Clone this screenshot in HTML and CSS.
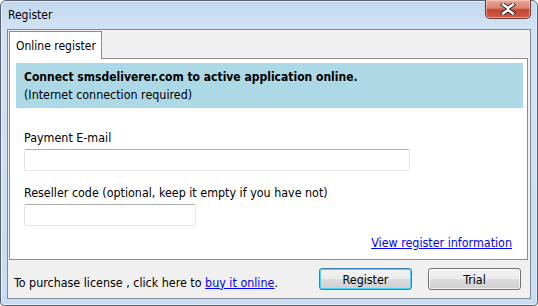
FILE: index.html
```html
<!DOCTYPE html>
<html>
<head>
<meta charset="utf-8">
<link rel="stylesheet" href="styles.css">
</head>
<body>
<div class="window">
  <div class="titlebar">
    <span class="title">Register</span>
    <div class="close">
      <svg width="16" height="12" viewBox="0 0 16 12">
        <path d="M3 1.5 L8 5 L13 1.5 M3 10.5 L8 7 L13 10.5" fill="none" stroke="#3a2a2a" stroke-width="4.4" stroke-linecap="square"/>
        <path d="M3 1.5 L8 5 L13 1.5 M3 10.5 L8 7 L13 10.5" fill="none" stroke="#ffffff" stroke-width="2.4" stroke-linecap="square"/>
      </svg>
    </div>
  </div>
  <div class="client">
    <div class="tabstrip">
      <div class="tab">Online register</div>
    </div>
    <div class="tabpage">
      <div class="banner">
        <div class="banner-title">Connect smsdeliverer.com to active application online.</div>
        <div class="banner-sub">(Internet connection required)</div>
      </div>
      <div class="field field-first">
        <label class="label">Payment E-mail</label>
        <div class="input input-wide"></div>
      </div>
      <div class="field field-next">
        <label class="label">Reseller code (optional, keep it empty if you have not)</label>
        <div class="input input-short"></div>
      </div>
      <div class="info-row">
        <a class="link" href="#">View register information</a>
      </div>
    </div>
    <div class="footer">
      <span class="purchase">To purchase license , click here to <a class="link" href="#">buy it online</a>.</span>
      <div class="buttons">
        <button class="btn btn-default">Register</button>
        <button class="btn">Trial</button>
      </div>
    </div>
  </div>
</div>
</body>
</html>
```
FILE: styles.css
```css
html, body {
  margin: 0;
  padding: 0;
  background: #ffffff;
}
body {
  font-family: "DejaVu Sans Condensed", "DejaVu Sans", Tahoma, sans-serif;
  font-size: 12.4px;
  color: #000;
}
.window {
  box-sizing: border-box;
  width: 538px;
  height: 306px;
  border: 1px solid #5a6470;
  border-radius: 6px 6px 4px 4px;
  background: linear-gradient(180deg, #c4d8ee 0px, #d3e3f4 30px, #c9dcf1 100%);
  display: flex;
  flex-direction: column;
  padding: 0 6px 6px 6px;
  box-shadow: inset 0 0 0 1px #e6eef8;
}
.titlebar {
  height: 28px;
  display: flex;
  align-items: flex-start;
  position: relative;
}
.title {
  font-size: 12px;
  margin-top: 7px;
  margin-left: 1px;
  color: #000;
}
.close {
  position: absolute;
  right: 0px;
  top: -1px;
  width: 46px;
  height: 19px;
  box-sizing: border-box;
  border: 1px solid #6d3a36;
  border-top: none;
  border-radius: 0 0 5px 5px;
  background: linear-gradient(180deg, #e9a99a 0%, #d88170 45%, #c4442f 55%, #cf5d48 100%);
  display: flex;
  align-items: center;
  justify-content: center;
  box-shadow: inset 0 0 0 1px rgba(255,220,210,0.5);
}
.client {
  flex: 1;
  border: 1px solid #7f8894;
  background: #f0f0f0;
  display: flex;
  flex-direction: column;
}
.tabstrip {
  display: flex;
  height: 27px;
  padding-left: 1px;
  margin-top: 1px;
  position: relative;
  z-index: 1;
}
.tab {
  background: #ffffff;
  border: 1px solid #898c95;
  border-bottom: none;
  width: 93px;
  box-sizing: border-box;
  padding-left: 6px;
  display: flex;
  align-items: center;
  font-size: 12px;
  height: 28px;
  white-space: nowrap;
}
.tabpage {
  margin: 0 2px 0 1px;
  background: #ffffff;
  border: 1px solid #898c95;
  height: 202px;
  box-sizing: border-box;
  padding: 4px 4px 0 6px;
  display: flex;
  flex-direction: column;
}
.banner {
  background: #add8e6;
  height: 45px;
  padding: 5px 8px 0 8px;
  box-sizing: border-box;
}
.banner-title {
  font-weight: bold;
  font-size: 12px;
  line-height: 18px;
}
.banner-sub {
  font-size: 12.4px;
  line-height: 18px;
}
.field {
  display: flex;
  flex-direction: column;
  padding-left: 8px;
}
.field-first {
  margin-top: 21px;
}
.field-next {
  margin-top: 13px;
}
.label {
  font-size: 12.4px;
  line-height: 18px;
  margin-bottom: 2px;
}
.input {
  height: 22px;
  box-sizing: border-box;
  border: 1px solid #abadb3;
  border-color: #abadb3 #e3e9ef #e3e9ef #e2e3ea;
  border-radius: 2px;
  background: #fff;
}
.input-wide { width: 386px; }
.input-short { width: 172px; }
.info-row {
  display: flex;
  justify-content: flex-end;
  padding-right: 11px;
  margin-top: 8px;
  line-height: 18px;
}
.link {
  color: #0000ff;
  text-decoration: underline;
  font-size: 12.4px;
}
.footer {
  flex: 1;
  display: flex;
  align-items: center;
  padding: 0 9px 0 6px;
}
.purchase {
  font-size: 12.4px;
  margin-top: 6px;
}
.buttons {
  margin-left: auto;
  display: flex;
  gap: 16px;
  margin-top: 0;
}
.btn {
  width: 93px;
  height: 22px;
  box-sizing: border-box;
  border: 1px solid #707070;
  border-radius: 3px;
  background: linear-gradient(180deg, #f2f2f2 0%, #ebebeb 50%, #dddddd 50%, #cfcfcf 100%);
  font-family: "DejaVu Sans Condensed", "DejaVu Sans", Tahoma, sans-serif;
  font-size: 12.4px;
  color: #000;
  padding: 0;
  box-shadow: inset 0 0 0 1px rgba(255,255,255,0.7);
}
.btn-default {
  border-color: #3c7fb1;
  box-shadow: inset 0 0 0 1px #48d4fb;
}
```
